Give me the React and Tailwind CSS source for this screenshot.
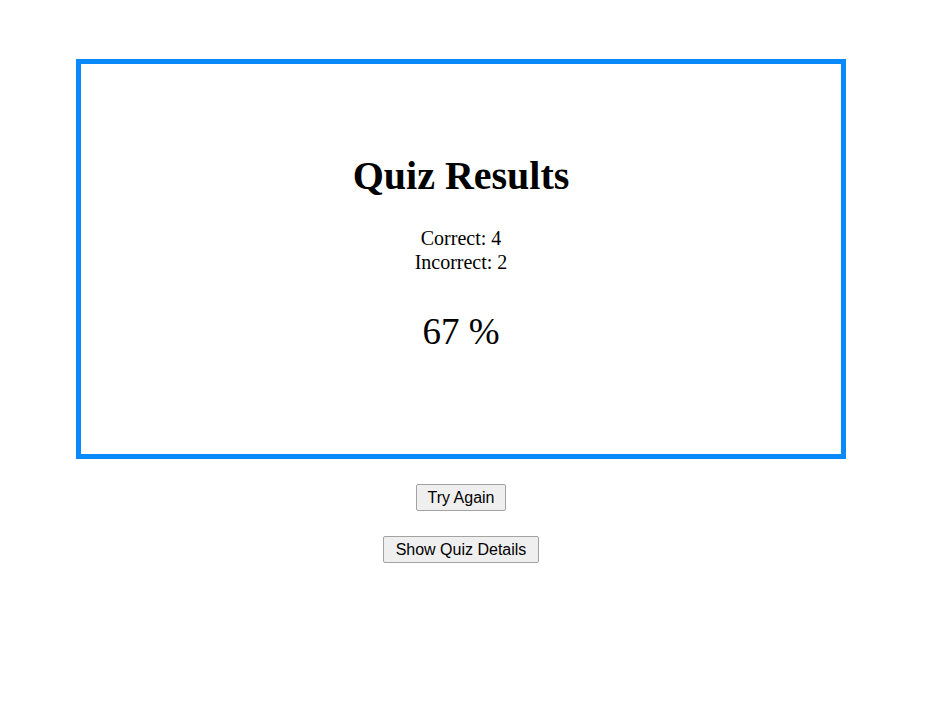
export default function App() {
  return (
    <div className="w-[948px] h-[720px] bg-white pt-[59px]" style={{ fontFamily: '"Liberation Serif", serif' }}>
      <div className="ml-[76px] w-[770px] h-[400px] border-[5px] border-[#0a89fa] flex flex-col items-center pt-[90px] text-black">
        <h1 className="text-[40px] font-bold leading-[44px] m-0">Quiz Results</h1>
        <div className="mt-[28px] text-[20px] leading-[24px] text-center">
          <div>Correct: 4</div>
          <div>Incorrect: 2</div>
        </div>
        <div className="mt-[37px] text-[37px] leading-[42px]">67 %</div>
      </div>
      <div className="ml-[76px] w-[770px] flex flex-col items-center gap-[25px] mt-[25px]" style={{ fontFamily: '"Liberation Sans", Arial, sans-serif' }}>
        <button className="h-[27px] w-[90px] text-[16px] leading-[18px] text-black bg-[#efefef] border border-[#a3a3a3] rounded-[2px]">Try Again</button>
        <button className="h-[27px] w-[156px] text-[16px] leading-[18px] text-black bg-[#efefef] border border-[#a3a3a3] rounded-[2px]">Show Quiz Details</button>
      </div>
    </div>
  );
}
